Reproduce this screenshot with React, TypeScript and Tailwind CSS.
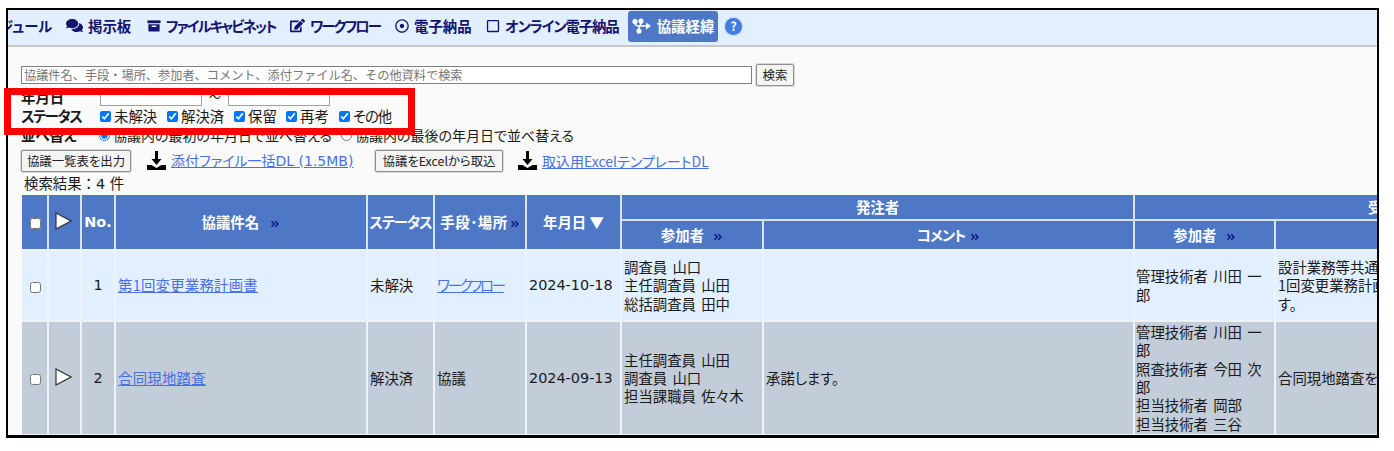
import { FaAngleDoubleRight, FaComments, FaEdit, FaRegDotCircle, FaRegSquare } from "react-icons/fa";

const FONT = "font-['DejaVu_Sans','Noto_Sans_CJK_JP',sans-serif]";
const JP = "font-['Noto_Sans_CJK_JP','DejaVu_Sans',sans-serif]";
const PALT = "[font-feature-settings:'palt']";
const NO_PALT = "[font-feature-settings:normal]";

function ArchiveIcon() {
  return (
    <svg width="14" height="14" viewBox="0 0 15 14" fill="#14146e" className="shrink-0">
      <rect x="0.500" y="1" width="14" height="3" />
      <path d="M1.500 5h12v8h-12z M5 6.500v1.500h5v-1.500z" fillRule="evenodd" />
    </svg>
  );
}

function FlowIcon() {
  return (
    <svg width="20" height="16" viewBox="0 0 20 16" fill="none" stroke="#fff" strokeWidth="1.600" className="shrink-0">
      <circle cx="3" cy="3.500" r="1.800" fill="#fff" />
      <circle cx="9" cy="3" r="1.800" fill="#fff" />
      <circle cx="7" cy="13" r="1.800" fill="#fff" />
      <path d="M3 5c0 3 2 3 4 3h9M9 5c0 2-1 2-1 3M7 11V8" />
      <path d="M14 4.500 19 8l-5 3.500z" fill="#fff" stroke="none" />
    </svg>
  );
}

function DownloadIcon() {
  return (
    <svg width="19" height="20" viewBox="0 0 19 20" fill="#000" className="shrink-0">
      <path d="M8 0h3v8h3.500l-5 6-5-6H8z" />
      <path d="M0 14h4.500l5 3 5-3H19v5H0z" />
    </svg>
  );
}

function PlayIcon({ fill }: { fill: string }) {
  return (
    <svg width="17" height="18" viewBox="0 0 17 18" className="mx-auto -mt-[3px] -translate-x-[1px]">
      <path d="M1 1 16 9 1 17z" fill={fill} stroke="#333" strokeWidth="1.200" />
    </svg>
  );
}

function NavItem({ icon, label, width, tracking }: { icon: React.ReactNode; label: string; width: string; tracking?: string }) {
  return (
    <div className={`flex items-center gap-[5px] text-[#14146e] font-bold text-[14.400px] whitespace-nowrap ${width}`}>
      {icon}
      <span className={tracking}>{label}</span>
    </div>
  );
}

function Check({ label, width, tracking }: { label: string; width: string; tracking?: string }) {
  return (
    <label className={`flex items-center gap-[3px] ${width}`}>
      <input type="checkbox" defaultChecked className="w-[11px] h-[11px] m-0 accent-[#0075ff]" />
      <span className={tracking}>{label}</span>
    </label>
  );
}

function More({ gap = "ml-[6px]" }: { gap?: string }) {
  return <FaAngleDoubleRight size={10} color="#14148c" className={`inline align-[-1px] ${gap}`} />;
}

const th = "bg-[#4e78c6] text-white font-bold text-center text-[14.400px] p-0 align-middle";
const sep = "border-r-2 border-[#d8e2f2]";
const smallBtn =
  "h-[22px] border border-[#8f8f8f] rounded-[2px] bg-[#f4f4f4] text-[12.400px] leading-none whitespace-nowrap text-[#222] shadow-[0_0_0_1px_#d8d8d8]";
const linkText = "text-[#4a6ee6] underline";

const ROWS = [
  {
    no: 1,
    bg: "bg-[#e2efff]",
    h: "h-[71px]",
    title: "第1回変更業務計画書",
    status: "未解決",
    place: "ワークフロー",
    placeLink: true,
    date: "2024-10-18",
    orderer: ["調査員 山口", "主任調査員 山田", "総括調査員 田中"],
    comment: "",
    contractor: ["管理技術者 川田 一郎"],
    reply: ["設計業務等共通仕様書に基づき第", "1回変更業務計画書を提出しま", "す。"],
    play: false,
  },
  {
    no: 2,
    bg: "bg-[#c3ccd9]",
    h: "h-[114px]",
    title: "合同現地踏査",
    status: "解決済",
    place: "協議",
    placeLink: false,
    date: "2024-09-13",
    orderer: ["主任調査員 山田", "調査員 山口", "担当課職員 佐々木"],
    comment: "承諾します。",
    contractor: ["管理技術者 川田 一郎", "照査技術者 今田 次郎", "担当技術者 岡部", "担当技術者 三谷"],
    reply: ["合同現地踏査を実施します。"],
    play: true,
  },
];

export default function App() {
  return (
    <div className={`w-[1394px] h-[451px] bg-white pt-[8px] pl-[6px] ${JP} ${PALT}`}>
      <div className="w-[1373px] h-[430px] border-2 border-black border-b-[3px] overflow-hidden bg-[#fafafa] text-[14.400px] leading-[18.300px] text-[#1a1a1a]">
        {/* nav */}
        <div className="h-[37px] pb-[3px] bg-[#e2efff] border-b-2 border-[#c8c8c8] flex items-center overflow-hidden">
          <div className="flex items-center -ml-[9px]">
            <NavItem icon={null} label="ジュール" width="w-[67px]" />
            <NavItem icon={<FaComments size={17} color="#14146e" className="shrink-0" />} label="掲示板" width="w-[81px]" />
            <NavItem icon={<ArchiveIcon />} label="ファイルキャビネット" width="w-[143px]" tracking="tracking-[-1.900px]" />
            <NavItem icon={<FaEdit size={15} color="#14146e" className="shrink-0" />} label="ワークフロー" width="w-[105px]" tracking="tracking-[-1.900px]" />
            <NavItem icon={<FaRegDotCircle size={14} color="#14146e" className="shrink-0" />} label="電子納品" width="w-[91px]" />
            <NavItem icon={<FaRegSquare size={14} color="#14146e" className="shrink-0" />} label="オンライン電子納品" width="w-[142px]" tracking="tracking-[-1.100px]" />
          </div>
          <div className="w-[90px] h-[31px] rounded-[3px] bg-[#4e78c6] flex items-center justify-center gap-[5px] text-white font-bold text-[14.400px]">
            <FlowIcon />
            <span className="whitespace-nowrap">協議経緯</span>
          </div>
          <div className="ml-[7px] w-[17px] h-[17px] rounded-full bg-[#3f7ede] text-white text-[12px] font-bold flex items-center justify-center shadow-[0_0_2px_#7aa7ea]">
            ?
          </div>
        </div>

        {/* search form */}
        <div className="pl-[13px] pt-[17px]">
          <div className="flex items-center gap-[4px] h-[22px]">
            <input
              readOnly
              placeholder="協議件名、手段・場所、参加者、コメント、添付ファイル名、その他資料で検索"
              className={`w-[731px] h-[18px] bg-white border border-[#808080] px-[2px] text-[12.200px] placeholder:text-[#757575] ${NO_PALT}`}
            />
            <button className={`${smallBtn} w-[38px]`}>検索</button>
          </div>
          <div className="flex items-center h-[18px] mt-[2px]">
            <span className="w-[79px] font-bold">年月日</span>
            <input readOnly className="w-[102px] h-[18px] bg-white border border-[#a0a0a0]" />
            <span className="w-[26px] text-center text-[12px]">～</span>
            <input readOnly className="w-[102px] h-[18px] bg-white border border-[#a0a0a0]" />
          </div>
          <div className="flex items-center h-[18px] mt-[1px]">
            <span className="w-[79px] font-bold tracking-[-1.400px]">ステータス</span>
            <Check label="未解決" width="w-[67px]" />
            <Check label="解決済" width="w-[67px]" />
            <Check label="保留" width="w-[52px]" />
            <Check label="再考" width="w-[53px]" />
            <Check label="その他" width="" tracking="tracking-[-1px]" />
          </div>
          <div className="flex items-center h-[18px] mt-[1px]">
            <span className="w-[78px] font-bold">並べ替え</span>
            <label className="flex items-center gap-[3px] mr-[9px] text-[14px]">
              <input type="radio" name="sort" defaultChecked className="w-[11px] h-[11px] m-0 accent-[#0075ff]" />
              <span>協議内の最初の年月日で並べ替える</span>
            </label>
            <label className="flex items-center gap-[3px] text-[14px]">
              <input type="radio" name="sort" className="w-[11px] h-[11px] m-0" />
              <span>協議内の最後の年月日で並べ替える</span>
            </label>
          </div>
          <div className="flex items-center h-[24px] mt-[5px]">
            <button className={`${smallBtn} w-[110px]`}>協議一覧表を出力</button>
            <span className="ml-[16px] mr-[5px]">
              <DownloadIcon />
            </span>
            <a className={`${linkText} w-[204px] text-[14px] ${FONT}`}>添付ファイル一括DL (1.5MB)</a>
            <button className={`${smallBtn} w-[128px]`}>協議をExcelから取込</button>
            <span className="ml-[15px] mr-[5px]">
              <DownloadIcon />
            </span>
            <a className={`${linkText} text-[14px]`}>取込用ExcelテンプレートDL</a>
          </div>
          <div className={`pl-[3px] h-[22px] pt-[2px] ${FONT} ${NO_PALT}`}>検索結果：4 件</div>

          <table className="table-fixed border-separate border-spacing-0 w-[1622px] ml-[1px]">
            <colgroup>
              <col className="w-[27px]" />
              <col className="w-[33px]" />
              <col className="w-[34px]" />
              <col className="w-[252px]" />
              <col className="w-[67px]" />
              <col className="w-[92px]" />
              <col className="w-[95px]" />
              <col className="w-[142px]" />
              <col className="w-[371px]" />
              <col className="w-[141px]" />
              <col className="w-[368px]" />
            </colgroup>
            <thead>
              <tr className="h-[26px]">
                <th rowSpan={2} className={`${th} ${sep}`}>
                  <input type="checkbox" className="w-[11px] h-[11px] align-middle translate-x-[1px]" />
                </th>
                <th rowSpan={2} className={`${th} ${sep}`}>
                  <PlayIcon fill="#fff" />
                </th>
                <th rowSpan={2} className={`${th} ${sep} ${FONT}`}>No.</th>
                <th rowSpan={2} className={`${th} ${sep}`}>
                  協議件名 <More gap="ml-2" />
                </th>
                <th rowSpan={2} className={`${th} ${sep} whitespace-nowrap tracking-[-1px]`}>ステータス</th>
                <th rowSpan={2} className={`${th} ${sep} whitespace-nowrap`}>
                  <span className="tracking-[0.500px]">手段･場所</span>
                  <More gap="ml-[2px]" />
                </th>
                <th rowSpan={2} className={`${th} ${sep}`}>年月日 ▼</th>
                <th colSpan={2} className={`${th} ${sep} border-b-2 text-[13px]`}>発注者</th>
                <th colSpan={2} className={`${th} border-b-2 border-[#d8e2f2] text-[13px]`}>受注者</th>
              </tr>
              <tr className="h-[28px]">
                <th className={`${th} ${sep}`}>
                  参加者 <More />
                </th>
                <th className={`${th} ${sep}`}>
                  <span className="tracking-[-1px]">コメント</span>
                  <More gap="ml-[5px]" />
                </th>
                <th className={`${th} ${sep}`}>
                  参加者 <More />
                </th>
                <th className={th}></th>
              </tr>
            </thead>
            <tbody>
              {ROWS.map((r) => {
                const td = `${r.bg} border-r-2 border-t-2 border-[#eef3fa] px-[2px] py-0 align-middle`;
                return (
                  <tr key={r.no} className={r.h}>
                    <td className={`${td} text-center`}>
                      <input type="checkbox" className="w-[11px] h-[11px] align-middle translate-x-[1px]" />
                    </td>
                    <td className={`${td} text-center`}>{r.play && <PlayIcon fill="#fff" />}</td>
                    <td className={`${td} text-center ${FONT}`}>{r.no}</td>
                    <td className={td}>
                      <a className={`${linkText} tracking-[0.250px]`}>{r.title}</a>
                    </td>
                    <td className={td}>{r.status}</td>
                    <td className={td}>
                      {r.placeLink ? <a className={`${linkText} tracking-[-2.200px]`}>{r.place}</a> : r.place}
                    </td>
                    <td className={`${td} ${FONT}`}>{r.date}</td>
                    <td className={`${td} [word-spacing:2px]`}>
                      {r.orderer.map((n) => (
                        <div key={n}>{n}</div>
                      ))}
                    </td>
                    <td className={td}>{r.comment}</td>
                    <td className={`${td} pl-[1px] [word-spacing:2px]`}>
                      {r.contractor.map((n) => (
                        <div key={n}>{n}</div>
                      ))}
                    </td>
                    <td className={td}>
                      {r.reply.map((n) => (
                        <div key={n} className="whitespace-nowrap">{n}</div>
                      ))}
                    </td>
                  </tr>
                );
              })}
              <tr className="h-[20px]">
                {Array.from({ length: 11 }).map((_, i) => (
                  <td key={i} className="bg-[#e2efff] border-r-2 border-t-2 border-[#eef3fa]" />
                ))}
              </tr>
            </tbody>
          </table>
        </div>
      </div>

      {/* highlight over the status filter */}
      <div className="absolute left-[4px] top-[88px] w-[411px] h-[47px] border-[7px] border-[#ff0000]" />
    </div>
  );
}
